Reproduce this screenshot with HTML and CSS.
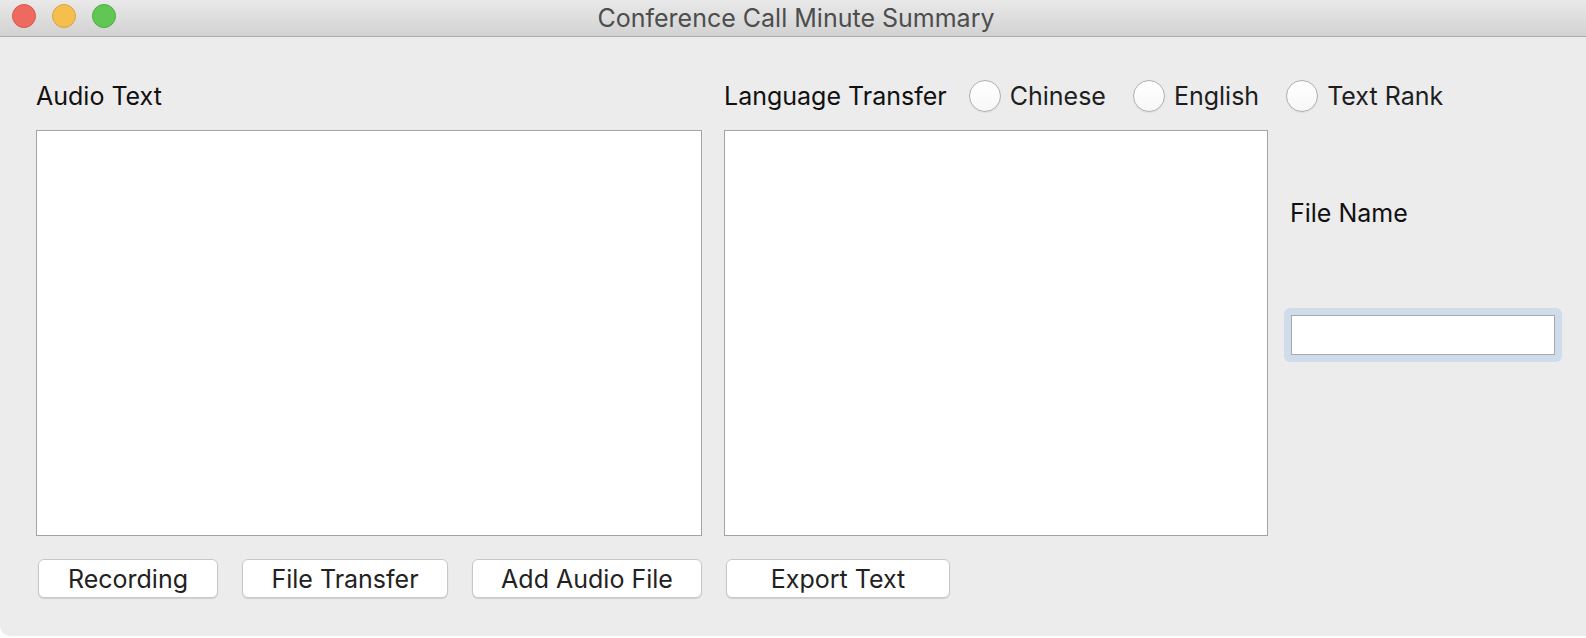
FILE: index.html
```html
<!DOCTYPE html>
<html lang="en">
<head>
<meta charset="utf-8">
<title>Conference Call Minute Summary</title>
<link rel="stylesheet" href="styles.css">
</head>
<body>
<div class="window">
  <div class="titlebar">
    <div class="lights">
      <span class="light red"></span>
      <span class="light yellow"></span>
      <span class="light green"></span>
    </div>
    <div class="title">Conference Call Minute Summary</div>
  </div>
  <div class="content">
    <div class="head head-left"><span class="label">Audio Text</span></div>
    <div class="head head-right">
      <span class="label">Language Transfer</span>
      <label class="radio r-chinese"><input type="radio" name="lang"><span>Chinese</span></label>
      <label class="radio r-english"><input type="radio" name="lang"><span>English</span></label>
      <label class="radio r-rank"><input type="radio" name="lang"><span>Text Rank</span></label>
    </div>
    <textarea class="area area-left"></textarea>
    <textarea class="area area-mid"></textarea>
    <div class="side">
      <div class="label side-label">File Name</div>
      <div class="ring"><input class="field" type="text"></div>
    </div>
    <div class="buttons buttons-left">
      <button class="btn btn-rec">Recording</button>
      <button class="btn btn-ft">File Transfer</button>
      <button class="btn btn-add">Add Audio File</button>
    </div>
    <div class="buttons buttons-mid">
      <button class="btn btn-exp">Export Text</button>
    </div>
  </div>
</div>
</body>
</html>
```

FILE: styles.css
```css
* { box-sizing: border-box; }
html, body {
  margin: 0;
  padding: 0;
  background: #ffffff;
  width: 1586px;
  height: 638px;
  overflow: hidden;
  font-family: "Inter", "Liberation Sans", "Noto Sans", sans-serif;
}
.window {
  width: 1586px;
  height: 636px;
  background: #ececec;
  border-bottom-left-radius: 10px;
  overflow: hidden;
}
.titlebar {
  height: 37px;
  background: linear-gradient(#e9e9e9, #d2d2d2);
  border-bottom: 1px solid #ababab;
  display: flex;
  align-items: center;
  justify-content: center;
  position: relative;
}
.lights {
  position: absolute;
  left: 12px;
  top: 4px;
  display: flex;
  gap: 16px;
}
.light {
  width: 24px;
  height: 24px;
  border-radius: 50%;
  display: block;
}
.red { background: #ee6a5f; border: 1px solid #d8574d; }
.yellow { background: #f6be4f; border: 1px solid #dea23b; }
.green { background: #62c655; border: 1px solid #50ab45; }
.title {
  font-size: 25px;
  color: #4d4d4d;
  margin-left: 6px;
  margin-top: -1px;
}
.content {
  display: grid;
  grid-template-columns: 666px 544px 318px;
  grid-template-rows: 58px 406px 62px;
  column-gap: 22px;
  padding: 35px 0 0 36px;
}
.head-left { grid-column: 1; grid-row: 1; }
.head-right { grid-column: 2 / 4; grid-row: 1; }
.area-left { grid-column: 1; grid-row: 2; }
.area-mid { grid-column: 2; grid-row: 2; }
.side { grid-column: 3; grid-row: 2 / 4; margin-left: -22px; }
.buttons-left { grid-column: 1; grid-row: 3; }
.buttons-mid { grid-column: 2; grid-row: 3; }
.head {
  display: flex;
  align-items: center;
  height: 48px;
}
.label {
  font-size: 25px;
  color: #111111;
}
.head-right .label { margin-right: 22px; }
.radio {
  display: flex;
  align-items: center;
  font-size: 25px;
  color: #1e1e1e;
}
.radio input {
  appearance: none;
  -webkit-appearance: none;
  width: 32px;
  height: 32px;
  margin: 0 9px 0 0;
  border-radius: 50%;
  border: 1px solid #b0b0b0;
  background: linear-gradient(#ffffff, #f7f7f7);
  box-shadow: 0 1px 1px rgba(0,0,0,0.06);
}
.r-chinese { margin-right: 27px; }
.r-english { margin-right: 27px; }
.area {
  display: block;
  width: 100%;
  height: 406px;
  margin: 0;
  background: #ffffff;
  border: 1px solid #a3a3a3;
  resize: none;
  outline: none;
  padding: 4px;
  font-family: inherit;
}
.side {
  padding-left: 16px;
}
.side-label {
  margin: 71px 0 0 6px;
  line-height: 24px;
}
.ring {
  margin-top: 83px;
  width: 278px;
  height: 54px;
  background: #cfdcec;
  border-radius: 6px;
  padding: 7px;
}
.field {
  display: block;
  width: 100%;
  height: 100%;
  margin: 0;
  border: 1px solid #a9a9a9;
  background: #ffffff;
  outline: none;
  padding: 0 6px;
  font-size: 20px;
  font-family: inherit;
}
.buttons {
  display: flex;
  gap: 24px;
  padding-left: 2px;
  padding-top: 23px;
}
.btn {
  height: 39px;
  margin: 0;
  padding: 0;
  background: #ffffff;
  border: 1px solid #c8c8c8;
  border-radius: 6px;
  box-shadow: 0 1px 1px rgba(0,0,0,0.12);
  font-family: inherit;
  font-size: 25px;
  color: #222222;
}
.btn-rec { width: 180px; }
.btn-ft { width: 206px; }
.btn-add { width: 230px; }
.btn-exp { width: 224px; }
```
